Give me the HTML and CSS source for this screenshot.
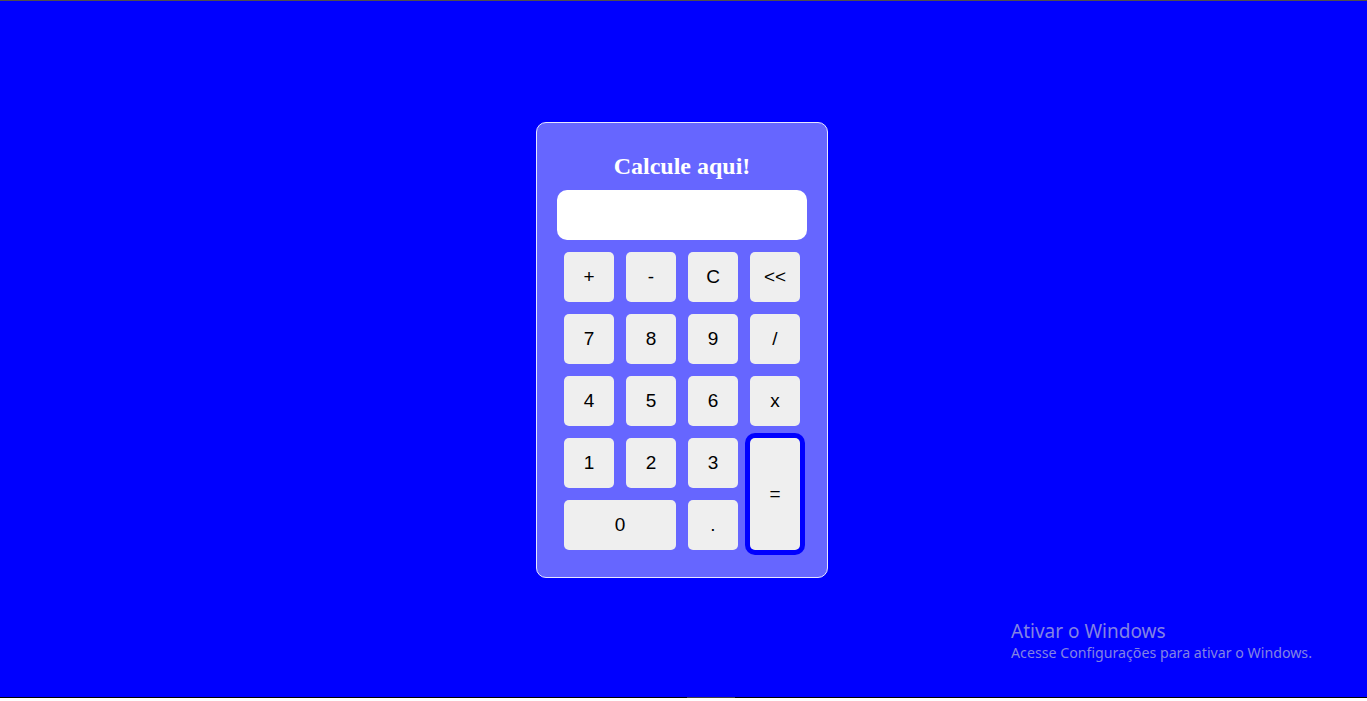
FILE: index.html
```html
<!DOCTYPE html>
<html lang="pt-BR">
<head>
<meta charset="utf-8">
<title>Calculadora</title>
<link rel="stylesheet" href="styles.css">
</head>
<body>
<div class="topline"></div>
<main class="stage">
  <section class="calc">
    <h2 class="title">Calcule aqui!</h2>
    <div class="display"></div>
    <div class="keys">
      <button class="key">+</button>
      <button class="key">-</button>
      <button class="key">C</button>
      <button class="key">&lt;&lt;</button>
      <button class="key">7</button>
      <button class="key">8</button>
      <button class="key">9</button>
      <button class="key">/</button>
      <button class="key">4</button>
      <button class="key">5</button>
      <button class="key">6</button>
      <button class="key">x</button>
      <button class="key">1</button>
      <button class="key">2</button>
      <button class="key">3</button>
      <button class="key key-eq">=</button>
      <button class="key key-zero">0</button>
      <button class="key">.</button>
    </div>
  </section>
</main>
<div class="watermark">
  <div class="wm-title">Ativar o Windows</div>
  <div class="wm-sub">Acesse Configurações para ativar o Windows.</div>
</div>
<div class="bottombar"><span class="bottom-tab"></span></div>
</body>
</html>
```

FILE: styles.css
```css
html, body {
  margin: 0;
  padding: 0;
}
body {
  width: 1367px;
  height: 701px;
  background: #ffffff;
  display: flex;
  flex-direction: column;
  overflow: hidden;
  position: relative;
}
.topline {
  height: 1px;
  background: #4f4f4f;
}
.stage {
  height: 696px;
  background: #0000ff;
  display: flex;
  align-items: center;
  justify-content: center;
}
.calc {
  box-sizing: border-box;
  width: 292px;
  height: 456px;
  margin-top: 2px;
  margin-right: 3px;
  background: #6666ff;
  border: 1px solid #e6e6ff;
  border-radius: 10px;
  padding-top: 29px;
  display: flex;
  flex-direction: column;
  align-items: center;
}
.title {
  margin: 0;
  font-family: "Liberation Serif", "Times New Roman", serif;
  font-size: 24px;
  font-weight: bold;
  line-height: 28px;
  color: #ffffff;
}
.display {
  margin-top: 10px;
  width: 250px;
  height: 50px;
  background: #ffffff;
  border-radius: 10px;
}
.keys {
  margin-top: 12px;
  display: grid;
  grid-template-columns: repeat(4, 50px);
  grid-auto-rows: 50px;
  gap: 12px;
}
.key {
  margin: 0;
  padding: 0;
  border: none;
  border-radius: 5px;
  background: #efefef;
  color: #000000;
  font-family: "Liberation Sans", Arial, sans-serif;
  font-size: 19px;
}
.key-eq {
  grid-column: 4;
  grid-row: 4 / span 2;
  box-shadow: 0 0 0 5px #0000ff;
}
.key-zero {
  grid-column: 1 / span 2;
}
.watermark {
  position: absolute;
  left: 1011px;
  top: 619px;
  font-family: "Noto Sans", "Open Sans", sans-serif;
  color: #8383e3;
}
.wm-title {
  font-size: 19px;
  line-height: 24px;
}
.wm-sub {
  font-size: 14.2px;
  line-height: 20px;
}
.bottombar {
  height: 1px;
  background: #000000;
  position: relative;
}
.bottom-tab {
  position: absolute;
  left: 687px;
  width: 48px;
  top: 0;
  height: 1px;
  background: #404040;
}
```
